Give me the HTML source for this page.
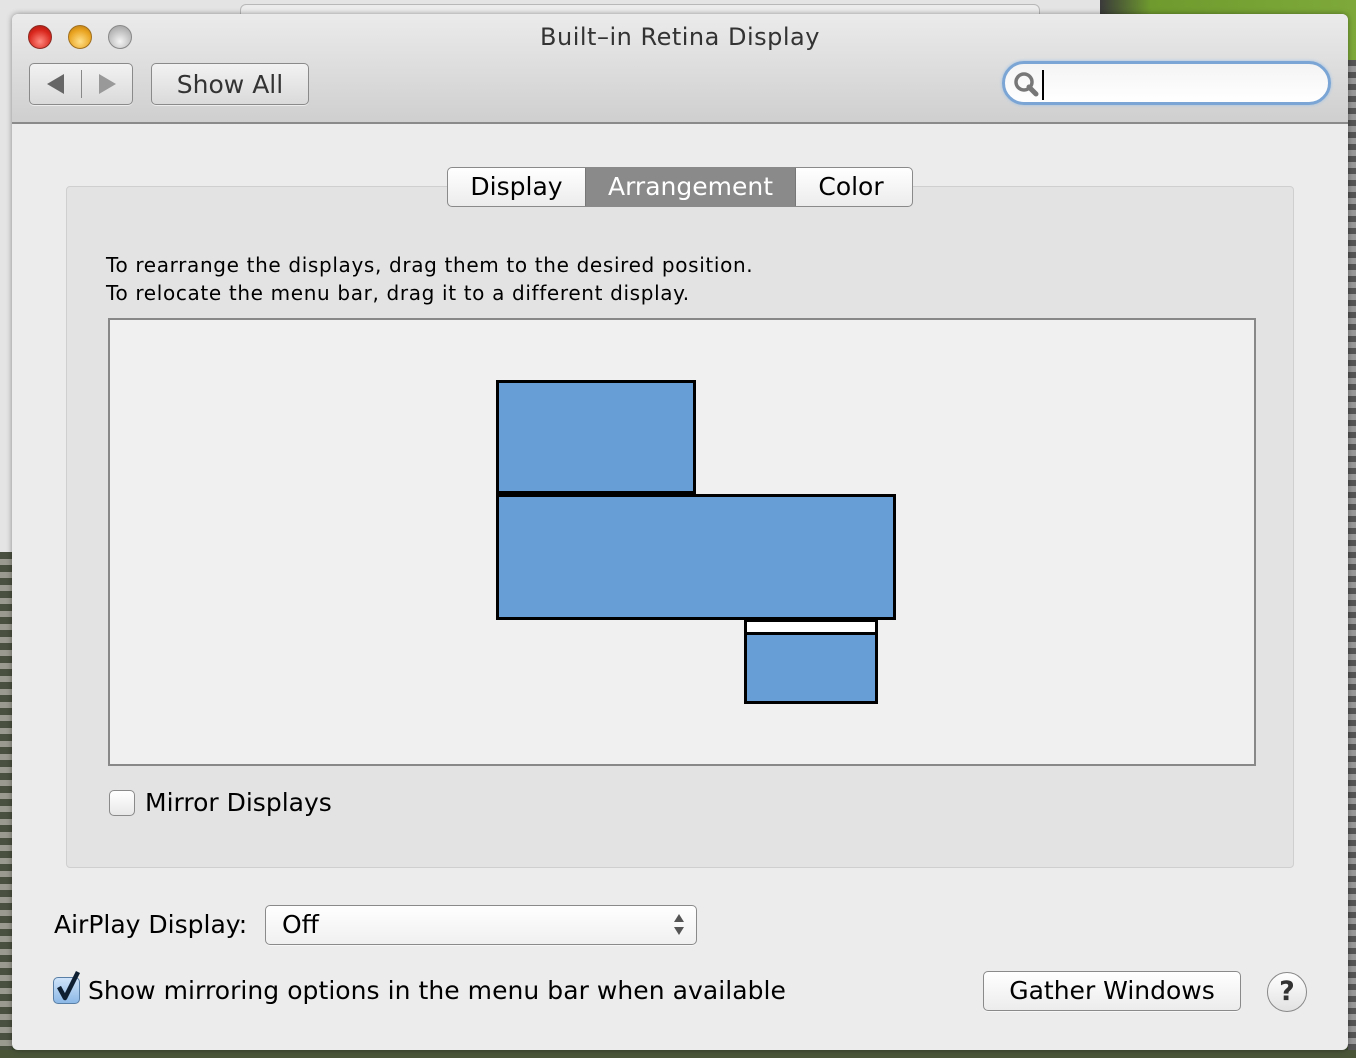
<!DOCTYPE html>
<html><head><style>
*{margin:0;padding:0;box-sizing:border-box}
body{width:1356px;height:1058px;overflow:hidden;position:relative;background:#3d4a30;font-family:"DejaVu Sans","Liberation Sans",sans-serif;color:#000}
.abs{position:absolute}
.btn{position:absolute;border:1px solid #8a8a8a;border-radius:5px;background:linear-gradient(#fdfdfd,#e6e6e6);box-shadow:0 1px 0 rgba(255,255,255,.6)}
.t{position:absolute;white-space:nowrap}
</style></head><body>
<div class="abs" style="left:0;top:0;width:1100px;height:552px;background:#e4e4e4"></div>
<div class="abs" style="left:1100px;top:0;width:256px;height:60px;background:linear-gradient(90deg,#3a3a3a,#6f9b2e 20%,#7ea93a)"></div>
<div class="abs" style="left:1348px;top:60px;width:8px;height:998px;background:repeating-linear-gradient(#555 0 6px,#999 6px 12px)"></div>
<div class="abs" style="left:0;top:552px;width:12px;height:506px;background:repeating-linear-gradient(#4a5040 0 7px,#9a9a90 7px 13px)"></div>
<div class="abs" style="left:0;top:1050px;width:1356px;height:8px;background:#4a5538"></div>
<div class="abs" style="left:240px;top:4px;width:800px;height:20px;border:1px solid #b8b8b8;border-radius:6px 6px 0 0;background:#ececec"></div>
<div class="abs" style="left:12px;top:14px;width:1336px;height:1036px;border-radius:6px;background:#ececec;overflow:hidden;box-shadow:0 0 6px rgba(0,0,0,.4)">
  <div class="abs" style="left:0;top:0;width:1336px;height:110px;background:linear-gradient(#ebebeb,#cfcfcf);border-bottom:2px solid #8a8a8a"></div>
  <div class="abs" style="left:16px;top:11px;width:24px;height:24px;border-radius:50%;background:radial-gradient(circle at 50% 70%,#ff8a80,#d9261c 60%,#9c1a12);border:1px solid #8c2a22"></div>
  <div class="abs" style="left:56px;top:11px;width:24px;height:24px;border-radius:50%;background:radial-gradient(circle at 50% 70%,#ffe08a,#e9a320 60%,#b27510);border:1px solid #a07020"></div>
  <div class="abs" style="left:96px;top:11px;width:24px;height:24px;border-radius:50%;background:radial-gradient(circle at 50% 70%,#f4f4f4,#bdbdbd 60%,#999);border:1px solid #888"></div>
  <div class="t" style="left:0;width:1336px;text-align:center;top:9px;font-size:24px;color:#333;letter-spacing:.5px">Built–in Retina Display</div>
  <div class="btn" style="left:17px;top:49px;width:104px;height:42px;background:linear-gradient(#f2f2f2,#dadada)">
    <div class="abs" style="left:51px;top:6px;width:1px;height:28px;background:#888"></div>
    <div class="abs" style="left:17px;top:10px;width:0;height:0;border-top:10px solid transparent;border-bottom:10px solid transparent;border-right:17px solid #666"></div>
    <div class="abs" style="left:69px;top:10px;width:0;height:0;border-top:10px solid transparent;border-bottom:10px solid transparent;border-left:17px solid #999"></div>
  </div>
  <div class="btn" style="left:139px;top:49px;width:158px;height:42px;background:linear-gradient(#f2f2f2,#dadada)"><div class="t" style="left:0;width:156px;text-align:center;top:6px;font-size:25px;color:#333">Show All</div></div>
  <div class="abs" style="left:990px;top:47px;width:329px;height:44px;border-radius:22px;border:3px solid #7aa5d4;background:linear-gradient(#f4f4f4,#fff);box-shadow:0 0 3px #9cc0e6">
    <svg class="abs" style="left:8px;top:7px" width="28" height="26" viewBox="0 0 28 26"><circle cx="11" cy="11" r="8" fill="none" stroke="#777" stroke-width="3.5"/><path d="M16 16 L23 23" stroke="#777" stroke-width="5" stroke-linecap="round"/></svg>
    <div class="abs" style="left:37px;top:6px;width:2px;height:30px;background:#000"></div>
  </div>
  <div class="abs" style="left:54px;top:172px;width:1228px;height:682px;border:1px solid #cfcfcf;border-radius:4px;background:#e3e3e3"></div>
  <div class="abs" style="left:435px;top:153px;width:466px;height:40px;border:1px solid #8a8a8a;border-radius:5px;background:linear-gradient(#fff,#ececec);overflow:hidden">
    <div class="t" style="left:0;width:137px;text-align:center;top:4px;font-size:25px">Display</div>
    <div class="abs" style="left:137px;top:0;width:211px;height:40px;background:#8a8a8a;border-left:1px solid #777;border-right:1px solid #777"></div>
    <div class="t" style="left:137px;width:211px;text-align:center;top:4px;font-size:25px;color:#fff">Arrangement</div>
    <div class="t" style="left:344px;width:118px;text-align:center;top:4px;font-size:25px">Color</div>
  </div>
  <div class="t" style="left:94px;top:237px;font-size:20px;line-height:28px;letter-spacing:.65px">To rearrange the displays, drag them to the desired position.<br>To relocate the menu bar, drag it to a different display.</div>
  <div class="abs" style="left:96px;top:304px;width:1148px;height:448px;border:2px solid #888;background:#f0f0f0"></div>
  <div class="abs" style="left:484px;top:366px;width:200px;height:114px;border:3px solid #000;background:#669ed5"></div>
  <div class="abs" style="left:484px;top:480px;width:400px;height:126px;border:3px solid #000;background:#669ed5"></div>
  <div class="abs" style="left:732px;top:605px;width:134px;height:85px;border:3px solid #000;background:#669ed5"></div>
  <div class="abs" style="left:735px;top:608px;width:128px;height:13px;background:#fff;border-bottom:3px solid #000"></div>
  <div class="abs" style="left:97px;top:776px;width:26px;height:26px;border:1px solid #8a8a8a;border-radius:5px;background:linear-gradient(#fff,#e8e8e8)"></div>
  <div class="t" style="left:133px;top:774px;font-size:25px">Mirror Displays</div>
  <div class="t" style="left:42px;top:896px;font-size:25px">AirPlay Display:</div>
  <div class="btn" style="left:253px;top:891px;width:432px;height:40px;background:linear-gradient(#fff,#f0f0f0)">
    <div class="t" style="left:16px;top:4px;font-size:25px">Off</div>
    <div class="abs" style="left:408px;top:8px;width:0;height:0;border-left:5px solid transparent;border-right:5px solid transparent;border-bottom:8px solid #555"></div>
    <div class="abs" style="left:408px;top:21px;width:0;height:0;border-left:5px solid transparent;border-right:5px solid transparent;border-top:8px solid #555"></div>
  </div>
  <div class="abs" style="left:41px;top:963px;width:27px;height:27px;border:1px solid #5a7fa6;border-radius:5px;background:linear-gradient(#cfe4fa,#8cb8e6)"></div>
  <svg class="abs" style="left:40px;top:955px" width="32" height="34" viewBox="0 0 32 34"><path d="M7 18 L13 29 L26 3" fill="none" stroke="#0f2033" stroke-width="4.5" stroke-linejoin="round"/></svg>
  <div class="t" style="left:76px;top:962px;font-size:25px;letter-spacing:.05px">Show mirroring options in the menu bar when available</div>
  <div class="btn" style="left:971px;top:957px;width:258px;height:40px;background:linear-gradient(#fff,#ececec)"><div class="t" style="left:0;width:256px;text-align:center;top:4px;font-size:25px">Gather Windows</div></div>
  <div class="abs" style="left:1255px;top:958px;width:40px;height:40px;border-radius:50%;border:1px solid #888;background:linear-gradient(#fff,#e2e2e2)"><div class="t" style="left:0;width:38px;text-align:center;top:3px;font-size:27px;color:#333;font-weight:bold">?</div></div>
</div>
</body></html>
